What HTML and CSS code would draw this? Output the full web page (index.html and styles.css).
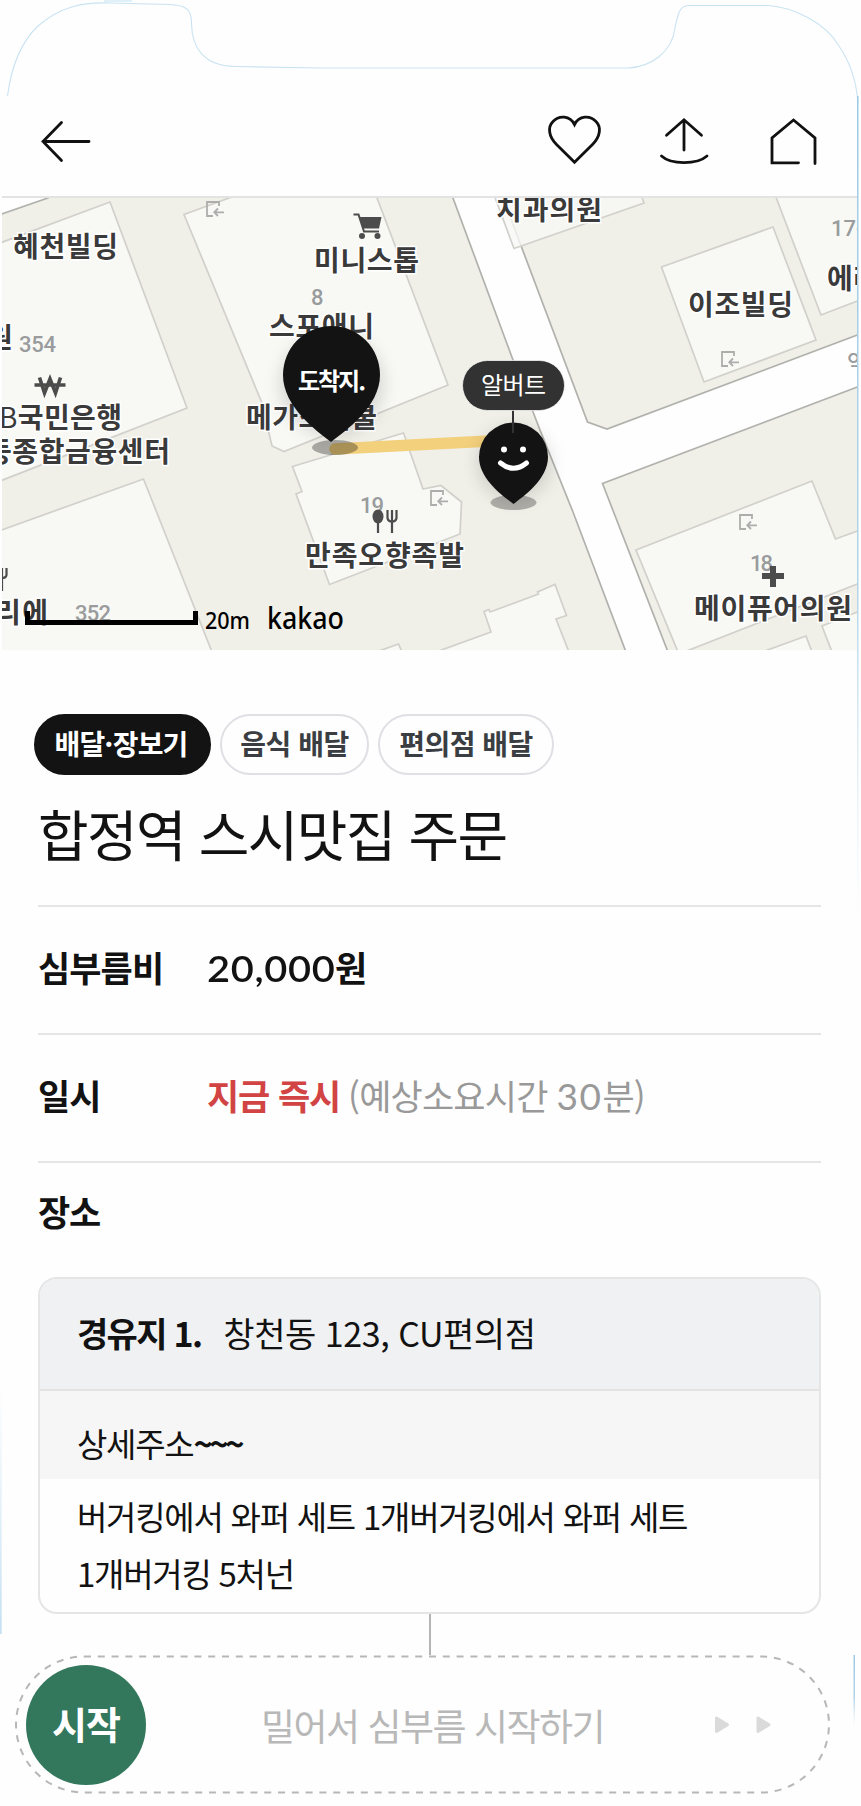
FILE: index.html
```html
<!DOCTYPE html>
<html lang="ko">
<head>
<meta charset="utf-8">
<title>합정역 스시맛집 주문</title>
<link rel="stylesheet" href="styles.css">
</head>
<body>
<main class="phone">
  <svg class="frame" viewBox="0 0 861 1806" aria-hidden="true">
    <defs>
      <linearGradient id="fadeL" x1="0" y1="0" x2="0" y2="1"><stop offset="0" stop-color="#d3e8f5" stop-opacity="0"/><stop offset="1" stop-color="#c4e0f1"/></linearGradient>
      <linearGradient id="fadeR" x1="0" y1="0" x2="0" y2="1"><stop offset="0" stop-color="#9ccae6"/><stop offset=".6" stop-color="#b4d5e8"/><stop offset="1" stop-color="#d3e8f5" stop-opacity="0"/></linearGradient>
    </defs>
    <path class="outline" d="M7.500 96C12 62 22 41 38 26C60 7 82 2 110 3L170 4.500C186 5 192 10 191.500 24C192 47 203 66 235 66.500L320 68H628C650 67 672 53 675 28C678 13 680 6 688 5.500H768C792 7 825 22 839 46C848 59 856 76 858 103"/>
    <rect x="104" y="0" width="28" height="2" fill="#e0f0f9"/>
    <rect x="857" y="96" width="1.500" height="830" fill="url(#fadeR)"/>
    <rect x="0" y="1380" width="1.700" height="254" fill="url(#fadeL)"/>
    <rect x="853.500" y="1655" width="1.500" height="72" fill="url(#fadeR)"/>
  </svg>

  <header class="topbar">
    <svg class="icon" width="52" height="52" viewBox="40 116 52 52"><path d="M43 141.500H89M61.500 122.500L43 141.500L61.500 160.500"/></svg>
    <div class="actions">
      <svg class="icon" width="56" height="52" viewBox="547 114 56 52"><path d="M574.500 162.300L556.500 144.500C548.500 136.500 547.500 127 553 121.500C559 115 570 115.500 574.500 124.500C579 115.500 590 115 596 121.500C601.500 127 600.500 136.500 592.500 144.500Z"/></svg>
      <svg class="icon" width="52" height="52" viewBox="658 114 52 52"><path d="M684 120V150M666.500 135.300L684 119.800L701.500 135.300M661.500 156C671 164.800 697 164.800 707 156"/></svg>
      <svg class="icon" width="50" height="52" viewBox="769 114 50 52"><path d="M798.500 162.800H772V137.800L793.500 120L815 137.800V163.500"/></svg>
    </div>
  </header>

  <svg class="map" viewBox="2 198 855 452" role="img" aria-label="지도">
    <defs>
      <g id="entry"><path d="M13 5V1H1V15H7M18 11.300H8.500M12 7.500L8.300 11.300L12 15"/></g>
      <filter id="soft" x="-50%" y="-50%" width="200%" height="200%"><feGaussianBlur stdDeviation="9"/></filter>
    </defs>
    <rect x="2" y="198" width="855" height="452" fill="#f0efe8"/>
    <g class="road">
      <path d="M0 214.500L48 198L46 190H0Z"/>
      <path d="M450 190L513 360L540 430L573 512L626 652H668L602.500 483.500L860 386V334L607 429L587.500 422L500 190Z"/>
    </g>
    <g class="building">
      <path d="M0 243L110 202L187 408L0 481Z"/>
      <path d="M240 194L184 214.500L262 403L272 446L284 451.500L448 385L374 190Z"/>
      <path d="M493 192L514 248.500L644 203L640 192Z" fill-opacity=".8"/>
      <path d="M661.500 267L773 227L816 340L704 382Z"/>
      <path d="M774 192L821 315L860 300V192Z"/>
      <path d="M636 550L812 481L835.500 539L860 530V583L684 652H678Z"/>
      <path d="M860 611L822 626L832 652H860Z"/>
      <path d="M762 652L806 636L812 652Z"/>
      <path d="M436 652L491 632L484 611.500L489 609.500L490 612L538.500 594L537.500 592L555 584.500L566.500 615.500L556 619L569 652Z"/>
      <path d="M0 530.500L143.500 479L212 652H0Z"/>
      <path d="M376 652L398.500 644L402 652Z"/>
      <path d="M292.500 466.500L403.500 433L423 489L441 485.500L461.500 502L460 534L329.500 584.500L296 494L302 491.500Z"/>
    </g>
    <g class="entries">
      <use href="#entry" x="206" y="201"/><use href="#entry" x="721" y="351"/>
      <use href="#entry" x="430" y="490"/><use href="#entry" x="739" y="514"/>
    </g>
    <g class="numbers">
      <text x="311" y="305">8</text>
      <text x="19" y="352" textLength="37">354</text>
      <text x="75" y="621" textLength="36">352</text>
      <text x="360" y="513" textLength="24">19</text>
      <text x="750" y="571" textLength="23">18</text>
      <text x="831" y="236">17-1</text>
      <text x="847" y="370">역</text>
    </g>
    <g class="poi">
      <path d="M359.500 217H381.500L379 228.500H363Z"/>
      <path class="cart" d="M353.500 214.500H358.500L364 231.500H379"/>
      <circle cx="362" cy="236" r="3"/><circle cx="377.500" cy="236" r="3"/>
      <path class="won" d="M39.500 377.500L44.500 393L50 379L55.500 393L60.500 377.500M34.500 385H65.500"/>
      <path d="M770 566H776V573H784V579H776V587H770V579H762V573H770Z"/>
      <ellipse cx="378" cy="516.500" rx="5.500" ry="7"/>
      <path class="fork" d="M378 520V533M392 520V533M387.500 510V518Q388 521.500 392 521.500Q396 521.500 396.500 518V510M392 510V521M2 577V591M2 578Q6 578 6.500 575V568M2 568V578"/>
    </g>
    <g class="labels">
      <text x="13" y="257" textLength="105">혜천빌딩</text>
      <text x="314" y="271" textLength="105">미니스톱</text>
      <text x="269" y="337" textLength="105">스포애니</text>
      <text x="246" y="428" textLength="131">메가스터쿨</text>
      <text x="-13" y="348">원</text>
      <text x="-1" y="428" textLength="123"><tspan font-weight="400">B</tspan>국민은행</text>
      <text x="-14" y="462" textLength="184">동종합금융센터</text>
      <text x="-5" y="623" textLength="53">리에</text>
      <text x="305" y="566" textLength="159">만족오향족발</text>
      <text x="496" y="220" textLength="106">치과의원</text>
      <text x="688" y="315" textLength="105">이조빌딩</text>
      <text x="827" y="289">에리</text>
      <text x="694" y="619" textLength="158">메이퓨어의원</text>
    </g>
    <path d="M27.500 611V622.500H195.500V611" fill="none" stroke="#000" stroke-width="5"/>
    <text class="scale" x="205" y="628.500" textLength="45" lengthAdjust="spacingAndGlyphs">20m</text>
    <text class="kakao" x="267" y="629" textLength="77" lengthAdjust="spacingAndGlyphs">kakao</text>

    <path d="M335 449L490 441" stroke="#f3d07c" stroke-width="11.500" stroke-linecap="round"/>
    <g fill="#000" opacity=".14" filter="url(#soft)"><circle cx="332" cy="384" r="51"/><circle cx="514" cy="463" r="36"/></g>
    <ellipse cx="335" cy="447.500" rx="23" ry="7.500" fill="#000" fill-opacity=".3"/>
    <ellipse cx="513.500" cy="502.500" rx="23" ry="7.500" fill="#000" fill-opacity=".28"/>
    <path d="M331 442C317 431 283 407 283 375A48.500 49 0 0 1 380 375C380 407 345 431 331 442Z" fill="#131313"/>
    <text class="pin-text" x="298" y="390" textLength="68">도착지.</text>
    <path d="M513.500 504C503 496 479 479 479 457A34.300 34.300 0 0 1 548 457C548 479 524 496 513.500 504Z" fill="#131313"/>
    <g fill="#fff"><circle cx="504" cy="449.500" r="3"/><circle cx="523" cy="449.500" r="3"/></g>
    <path d="M500.500 463Q513.500 473.500 526.500 463" fill="none" stroke="#fff" stroke-width="5" stroke-linecap="round"/>
    <path d="M513 409V433" stroke="#323232" stroke-width="2"/>
    <rect x="462.500" y="360.500" width="102" height="50" rx="25" fill="#323232" stroke="#fff" stroke-opacity=".7"/>
    <text class="name-text" x="481" y="394" textLength="65">알버트</text>
  </svg>

  <section class="content">
    <div class="chips">
      <span class="chip chip-on">배달·장보기</span>
      <span class="chip">음식 배달</span>
      <span class="chip">편의점 배달</span>
    </div>
    <h1 class="title">합정역 스시맛집 주문</h1>
    <dl class="facts">
      <div class="fact"><dt>심부름비</dt><dd class="strong"><span class="digits">20,000</span>원</dd></div>
      <div class="fact"><dt>일시</dt><dd><b class="now">지금 즉시</b><span class="eta">(예상소요시간 <span class="eta-num">30</span>분)</span></dd></div>
    </dl>
    <h2 class="place">장소</h2>
    <article class="card">
      <div class="card-head"><b>경유지 1.</b><span>창천동 123, CU편의점</span></div>
      <div class="card-sub">상세주소<span class="tilde">~~~</span></div>
      <p class="card-body">버거킹에서 와퍼 세트 1개버거킹에서 와퍼 세트<br>1개버거킹 5처넌</p>
    </article>
    <div class="link"></div>
  </section>

  <footer class="slider">
    <svg class="dash" viewBox="0 0 816 139" aria-hidden="true"><path d="M69 1.500H746A68 68 0 0 1 746 137.500H69A68 68 0 0 1 69 1.500Z"/></svg>
    <div class="knob">시작</div>
    <span class="hint">밀어서 심부름 시작하기</span>
    <svg class="arrows" width="58" height="20" viewBox="714 1716 58 20"><path d="M716.500 1719L727.500 1725.700L716.500 1732.500ZM758 1719L769 1725.700L758 1732.500Z"/></svg>
  </footer>
</main>
</body>
</html>
```

FILE: styles.css
```css
* { box-sizing: border-box; }
body {
  margin: 0;
  background: #fefefe;
  color: #121212;
  font-family: "Noto Sans CJK KR", sans-serif;
}
.phone {
  position: relative;
  width: 861px;
  height: 1806px;
  padding-top: 96px;
  overflow: hidden;
}
.frame {
  position: absolute;
  inset: 0;
  width: 861px;
  height: 1806px;
  pointer-events: none;
}
.outline { fill: none; stroke: #c9e3f2; stroke-width: 1.1; }

.topbar {
  display: flex;
  justify-content: space-between;
  height: 102px;
  margin: 0 4px 0 2px;
  padding: 18px 38px 0 38px;
  border-bottom: 2px solid #e3e3e3;
}
.topbar > .icon { margin-top: 2px; }
.icon {
  fill: none;
  stroke: #111;
  stroke-width: 2.8;
  stroke-linecap: round;
  stroke-linejoin: miter;
}
.actions { display: flex; }
.actions .icon + .icon { margin-left: 55px; }
.actions .icon:last-child { margin-left: 59px; }

.map { display: block; width: 855px; height: 452px; margin-left: 2px; }
.road { fill: #fefefe; stroke: #b1b1ad; stroke-width: 1.7; }
.building { fill: #f8f9f5; stroke: #d1d0cb; stroke-width: 1.7; }
.entries { fill: none; stroke: #adadad; stroke-width: 1.8; }
.numbers { fill: #999b9d; font: 500 22px Roboto, "Noto Sans CJK KR", sans-serif; }
.poi { fill: #4c4c4c; }
.cart { fill: none; stroke: #4c4c4c; stroke-width: 2; }
.won { fill: none; stroke: #4c4c4c; stroke-width: 3.6; }
.fork { fill: none; stroke: #4c4c4c; stroke-width: 2.2; }
.labels {
  fill: #3a3a3a;
  stroke: #fff;
  stroke-width: 3px;
  paint-order: stroke;
  font-size: 28px;
  font-weight: 700;
}
.scale { font: 500 23px "Noto Sans", sans-serif; }
.kakao { font: 500 31px "Noto Sans", sans-serif; }
.pin-text { fill: #fff; font-size: 24px; font-weight: 700; }
.name-text { fill: #fff; font-size: 24px; font-weight: 400; }

.content {
  display: flex;
  flex-direction: column;
  padding: 64px 40px 0 38px;
}
.chips { display: flex; gap: 9px; margin-left: -4px; }
.chip {
  display: flex;
  align-items: center;
  justify-content: center;
  width: 176px;
  height: 61px;
  padding-bottom: 4px;
  border: 2px solid #dfdfe4;
  border-radius: 31px;
  color: #3a3e42;
  font-size: 28px;
  font-weight: 700;
  letter-spacing: -0.5px;
}
.chip:nth-child(2) { width: 149px; }
.chip-on {
  width: 177px;
  padding-right: 3px;
  border-color: #131313;
  background: #131313;
  color: #fff;
  letter-spacing: -0.8px;
}
.title {
  height: 130px;
  margin: 0;
  padding-top: 27px;
  font-size: 55px;
  font-weight: 400;
  line-height: 60px;
  letter-spacing: -1.6px;
}
.facts { margin: 0; border-top: 2px solid #e5e5e5; }
.fact {
  display: flex;
  align-items: center;
  height: 128px;
  padding-bottom: 7px;
  border-bottom: 2px solid #e5e5e5;
  font-size: 35px;
  letter-spacing: -0.9px;
}
.fact dt { width: 169px; font-weight: 700; }
.fact dd { display: flex; align-items: baseline; margin: 0; }
.strong { font-weight: 700; }
.digits {
  display: inline-block;
  width: 128px;
  font-family: Lato, sans-serif;
  font-size: 37px;
  font-weight: 600;
  letter-spacing: 0.6px;
  transform: scaleX(1.075);
  transform-origin: 0 0;
}
.now { color: #d24444; font-weight: 700; letter-spacing: -1.1px; }
.eta { margin-left: 8px; color: #999; font-weight: 400; letter-spacing: -0.8px; }
.eta-num { font-family: Lato, sans-serif; font-size: 37px; letter-spacing: 1.5px; }
.place {
  height: 114px;
  margin: 0;
  padding-top: 24px;
  font-size: 35px;
  font-weight: 700;
  line-height: 48px;
  letter-spacing: -1.2px;
}
.card {
  height: 337px;
  overflow: hidden;
  border: 2px solid #e5e5e5;
  border-radius: 19px;
  font-size: 33px;
  letter-spacing: -1.25px;
}
.card-head {
  display: flex;
  align-items: center;
  gap: 22px;
  height: 112px;
  padding: 0 0 4px 37px;
  border-bottom: 2px solid #e3e3e3;
  background: #f0f1f3;
  font-size: 34px;
}
.card-head b { font-weight: 700; letter-spacing: -1.7px; }
.card-head span { letter-spacing: -0.45px; }
.card-sub {
  height: 88px;
  padding: 28px 0 0 37px;
  background: #f6f6f6;
  line-height: 48px;
}
.tilde { font-weight: 700; letter-spacing: -3.8px; }
.card-body { margin: 0; padding: 9px 0 0 37px; line-height: 57px; }
.link { align-self: center; width: 2px; height: 41px; background: #b5b5b5; }

.slider {
  position: absolute;
  left: 15px;
  top: 1655px;
  display: flex;
  align-items: center;
  width: 816px;
  height: 139px;
  padding: 0 59px 0 11px;
}
.dash { position: absolute; inset: 0; width: 816px; height: 139px; }
.dash path { fill: #fefefe; stroke: #b7b7b7; stroke-width: 2; stroke-dasharray: 7 6.8; }
.knob {
  position: relative;
  display: flex;
  align-items: center;
  justify-content: center;
  width: 120px;
  height: 120px;
  padding-bottom: 4px;
  border-radius: 50%;
  background: #33785c;
  color: #fff;
  font-size: 38px;
  font-weight: 700;
  letter-spacing: -1px;
}
.hint {
  position: relative;
  margin-left: 115px;
  color: #b8b8b8;
  font-size: 37px;
  font-weight: 400;
  letter-spacing: -1.5px;
}
.arrows { position: relative; margin-left: auto; }
.arrows path { fill: #dadada; stroke: #dadada; stroke-width: 3; stroke-linejoin: round; }
```
